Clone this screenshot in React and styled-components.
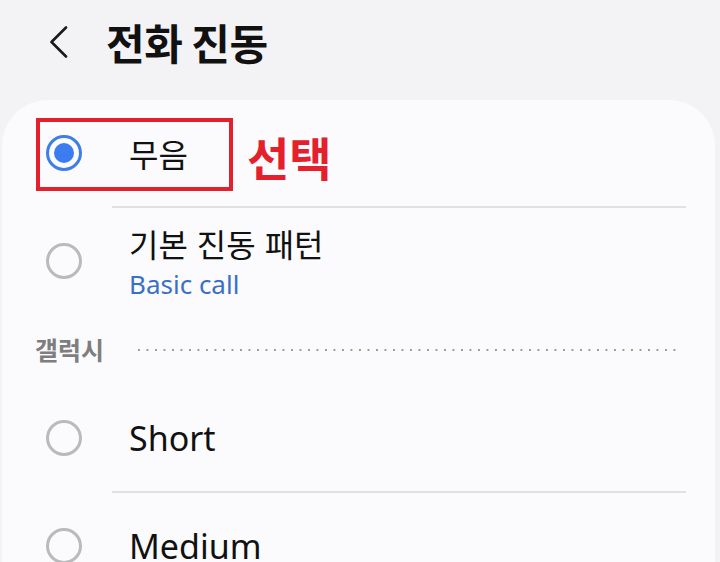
import React from 'react';
import styled, { createGlobalStyle } from 'styled-components';

const GlobalStyle = createGlobalStyle`
    html, body {
        margin: 0;
        padding: 0;
        background: #f3f3f5;
        height: 100%;
        overflow: hidden;
    }
    body {
        font-family: "Noto Sans", "Noto Sans CJK KR", sans-serif;
        color: #111;
    }
`;

const Page = styled.div`
    width: 720px;
    height: 562px;
    display: flex;
    flex-direction: column;
    overflow: hidden;
`;

const Header = styled.header`
    height: 100px;
    flex-shrink: 0;
    padding: 0 0 16px 49px;
    box-sizing: border-box;
    display: flex;
    align-items: center;
    gap: 37px;
`;

const BackButton = styled.button`
    border: none;
    background: none;
    padding: 0;
    width: 20px;
    height: 32px;
    display: flex;
    align-items: center;
    justify-content: center;
    color: #1a1a1a;
`;

const PageTitle = styled.h1`
    margin: 0;
    font-family: "Noto Sans CJK KR", sans-serif;
    font-size: 42px;
    font-weight: 700;
    line-height: 1;
    letter-spacing: -0.5px;
`;

const Card = styled.section`
    flex: 1 0 auto;
    margin: 0 5px 0 2px;
    background: #fbfbfd;
    border-radius: 46px 46px 0 0;
    display: flex;
    flex-direction: column;
`;

const Row = styled.div`
    position: relative;
    height: 106px;
    padding-left: 44px;
    display: flex;
    align-items: center;
    flex-shrink: 0;
`;

const Radio = styled.span`
    width: 36px;
    height: 36px;
    box-sizing: border-box;
    border-radius: 50%;
    border: ${p => (p.$checked ? '3.5px solid #3d7ee8' : '3px solid #bababa')};
    display: flex;
    align-items: center;
    justify-content: center;
    flex-shrink: 0;

    &::after {
        content: "";
        display: ${p => (p.$checked ? 'block' : 'none')};
        width: 20px;
        height: 20px;
        border-radius: 50%;
        background: #3b7cf0;
    }
`;

const TextBlock = styled.div`
    margin-left: 47px;
    display: flex;
    flex-direction: column;
`;

const OptionTitle = styled.span`
    font-size: 34px;
    line-height: 40px;
    color: #111;

    &:lang(ko) {
        font-family: "Noto Sans CJK KR", sans-serif;
        font-size: 32px;
    }
`;

const OptionSub = styled.span`
    margin-top: 6px;
    font-size: 26px;
    line-height: 30px;
    color: #3a6fc6;
`;

const Divider = styled.div`
    height: 2px;
    margin: 0 29px 0 110px;
    background: #e1e1e3;
    flex-shrink: 0;
`;

const SectionHeader = styled.div`
    height: 71px;
    padding: 0 35px 0 33px;
    display: flex;
    align-items: center;
    gap: 34px;
    flex-shrink: 0;
`;

const SectionLabel = styled.span`
    font-family: "Noto Sans CJK KR", sans-serif;
    font-size: 25px;
    font-weight: 700;
    color: #7e7e80;
    line-height: 1;
`;

const Dots = styled.span`
    flex: 1;
    height: 2px;
    background-image: linear-gradient(to right, #9a9a9c 2px, transparent 2px);
    background-size: 8.5px 2px;
    background-repeat: repeat-x;
`;

const Highlight = styled.div`
    position: absolute;
    left: 34px;
    top: 18px;
    width: 197px;
    height: 73px;
    box-sizing: border-box;
    border: 4px solid #e3202b;
    pointer-events: none;
`;

const Callout = styled.span`
    position: absolute;
    left: 245px;
    top: 33px;
    font-family: "Noto Sans CJK KR", sans-serif;
    font-size: 46px;
    font-weight: 700;
    line-height: 1;
    color: #e3202b;
`;

const Option = ({ title, sub, checked, lang, children }) => (
    <Row>
        <Radio $checked={checked} />
        <TextBlock>
            <OptionTitle lang={lang}>{title}</OptionTitle>
            {sub && <OptionSub>{sub}</OptionSub>}
        </TextBlock>
        {children}
    </Row>
);

export default function App() {
    return (
        <Page>
            <GlobalStyle />
            <Header>
                <BackButton aria-label="뒤로">
                    <svg width="20" height="32" viewBox="0 0 20 32" fill="none">
                        <polyline points="17,1.5 2.5,16 17,30.5" stroke="currentColor" strokeWidth="2.6" strokeLinecap="round" strokeLinejoin="round" />
                    </svg>
                </BackButton>
                <PageTitle>전화 진동</PageTitle>
            </Header>
            <Card>
                <Option title="무음" lang="ko" checked>
                    <Highlight />
                    <Callout>선택</Callout>
                </Option>
                <Divider />
                <Option title="기본 진동 패턴" lang="ko" sub="Basic call" />
                <SectionHeader>
                    <SectionLabel>갤럭시</SectionLabel>
                    <Dots />
                </SectionHeader>
                <Option title="Short" />
                <Divider />
                <Option title="Medium" />
            </Card>
        </Page>
    );
}
